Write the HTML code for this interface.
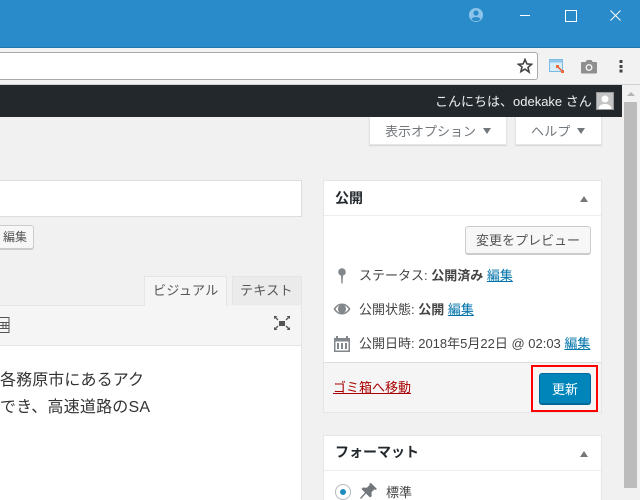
<!DOCTYPE html>
<html lang="ja"><head><meta charset="utf-8">
<style>
html,body{margin:0;padding:0;height:500px;overflow:hidden}
body{width:640px;position:relative;background:#f1f1f1;font-family:"Liberation Sans","Noto Sans CJK JP",sans-serif;font-size:13px;color:#444}
div,a,svg{position:absolute;white-space:nowrap}
.t{line-height:18px}
a{color:#0073aa;text-decoration:underline}
b{font-weight:700}
.box{background:#fff;border:1px solid #e5e5e5;box-sizing:border-box}
</style></head><body>
<div style="left:0;top:0;width:640px;height:48px;background:#2a8bcb"></div>
<div style="left:0;top:47px;width:640px;height:1px;background:#2478b0"></div>
<div style="left:0;top:48px;width:640px;height:37px;background:#f2f2f2;border-bottom:1px solid #d0d0d0;box-sizing:border-box"></div>
<div style="left:-5px;top:52px;width:543px;height:28px;background:#fff;border:1px solid #a9a9a9;border-radius:3px;box-sizing:border-box"></div>

<svg style="left:468px;top:7px" width="16" height="16" viewBox="0 0 16 16"><circle cx="8" cy="8" r="7" fill="#8cc4ea"/><circle cx="8" cy="6" r="2.6" fill="#2a8bcb"/><path d="M3.500 12c1-2.500 8-2.500 9 0l-2 2h-5z" fill="#2a8bcb"/></svg>
<div style="left:520px;top:15px;width:10px;height:1px;background:#fff"></div>
<div style="left:565px;top:10px;width:10px;height:10px;border:1px solid #fff"></div>
<svg style="left:610px;top:10px" width="11" height="11" viewBox="0 0 11 11"><path d="M.5.500l10 10M10.500.500l-10 10" stroke="#fff" stroke-width="1" fill="none"/></svg>

<svg style="left:517px;top:58px" width="16" height="16" viewBox="0 0 16 16"><path d="M8 1.500l1.900 4.400 4.700.4-3.600 3.100 1.100 4.700L8 11.100l-4.100 2.500L5 8.900 1.400 6.300l4.700-.4z" fill="none" stroke="#444" stroke-width="1.600"/></svg>
<svg style="left:548px;top:58px" width="18" height="16" viewBox="0 0 18 16"><rect x="1.500" y="1.500" width="13" height="12" fill="#d9edf9" stroke="#79b8e2"/><rect x="1.500" y="1.500" width="13" height="3" fill="#8cc4ea"/><path d="M9 8l5 5" stroke="#e0592a" stroke-width="1.500"/><rect x="8" y="7" width="3" height="3" fill="#ee6a3c"/><rect x="13" y="12" width="3" height="3" fill="#ee6a3c"/></svg>
<svg style="left:581px;top:59px" width="16" height="15" viewBox="0 0 16 15"><path d="M1 3h3.500L6 1h4.500l1.200 2H15a1 1 0 0 1 1 1v9.500a1 1 0 0 1-1 1H1a1 1 0 0 1-1-1V4a1 1 0 0 1 1-1z" fill="#8f8f8f"/><circle cx="8" cy="8.500" r="3.500" fill="#f2f2f2"/><circle cx="8" cy="8.500" r="2.100" fill="#8f8f8f"/></svg>
<svg style="left:619px;top:59px" width="4" height="14" viewBox="0 0 4 14"><rect x=".5" y="1" width="3" height="3" fill="#444"/><rect x=".5" y="6" width="3" height="3" fill="#444"/><rect x=".5" y="10.500" width="3" height="3" fill="#444"/></svg>

<div style="left:0;top:85px;width:622px;height:32px;background:#23282d"></div>
<div class="t" style="left:435px;top:93px;color:#eee;font-size:13px">こんにちは、odekake さん</div>
<div style="left:596px;top:92px;width:18px;height:18px;background:#c4c4c4;box-shadow:inset 0 0 0 1px #999;overflow:hidden">
<svg style="left:0;top:0" width="18" height="18" viewBox="0 0 18 18"><circle cx="9" cy="7" r="3.500" fill="#fff"/><path d="M2.500 17c.5-4 3.500-5 6.500-5s6 1 6.500 5z" fill="#fff"/></svg></div>

<div style="left:622px;top:85px;width:18px;height:415px;background:#f1f1f1"></div>
<div style="left:624px;top:102px;width:13px;height:386px;background:#bcbcbc"></div>
<div style="left:627px;top:92px;width:0;height:0;border-left:4px solid transparent;border-right:4px solid transparent;border-bottom:4px solid #b4b4b4"></div>

<div style="left:369px;top:117px;width:138px;height:28px;background:#fff;box-shadow:0 1px 1px rgba(0,0,0,.12);border:1px solid #e5e5e5;border-top:0;box-sizing:border-box"></div>
<div class="t" style="left:385px;top:123px;color:#72777c">表示オプション</div>
<div style="left:483px;top:128px;border-left:4px solid transparent;border-right:4px solid transparent;border-top:6px solid #72777c"></div>
<div style="left:515px;top:117px;width:87px;height:28px;background:#fff;box-shadow:0 1px 1px rgba(0,0,0,.12);border:1px solid #e5e5e5;border-top:0;box-sizing:border-box"></div>
<div class="t" style="left:531px;top:123px;color:#72777c;letter-spacing:.2px">ヘルプ</div>
<div style="left:577px;top:128px;border-left:4px solid transparent;border-right:4px solid transparent;border-top:6px solid #72777c"></div>

<div class="box" style="left:-3px;top:180px;width:305px;height:37px;border-color:#ddd"></div>
<div style="left:-5px;top:225px;width:39px;height:24px;background:#f7f7f7;border:1px solid #ccc;border-radius:3px;box-sizing:border-box;box-shadow:0 1px 0 #ccc"></div>
<div class="t" style="left:3px;top:228px;font-size:12px;color:#555">編集</div>

<div style="left:144px;top:276px;width:83px;height:30px;background:#f5f5f5;border:1px solid #e5e5e5;border-bottom:0;box-sizing:border-box"></div>
<div class="t" style="left:153px;top:282px;color:#555;letter-spacing:.4px">ビジュアル</div>
<div style="left:232px;top:276px;width:70px;height:29px;background:#ebebeb;border:1px solid #e5e5e5;border-bottom:0;box-sizing:border-box"></div>
<div class="t" style="left:240px;top:282px;color:#555;letter-spacing:.3px">テキスト</div>
<div style="left:0;top:305px;width:144px;height:1px;background:#e5e5e5"></div>
<div style="left:0;top:306px;width:302px;height:40px;background:#f5f5f5;border-right:1px solid #e5e5e5;border-bottom:1px solid #e5e5e5;box-sizing:border-box"></div>
<div style="left:0;top:346px;width:302px;height:154px;background:#fff;border-right:1px solid #e5e5e5;box-sizing:border-box"></div>
<svg style="left:0;top:317px" width="10" height="16" viewBox="0 0 10 16"><path d="M0 .5h9v15H0M0 5.500h9M0 8.500h9M0 11.500h9M3 5.500v6M6 5.500v6" fill="none" stroke="#555"/></svg>
<svg style="left:274px;top:316px" width="16" height="14" viewBox="0 0 16 14"><rect x="5" y="5" width="6" height="5" fill="#555"/><path d="M1 1l3 3M15 1l-3 3M1 13l3-3M15 13l-3-3" stroke="#555" stroke-width="1.300"/><path d="M0 0h3.500L0 3zM16 0h-3.500L16 3zM0 14h3.500L0 11zM16 14h-3.500l3.500-3z" fill="#555"/></svg>
<div class="t" style="left:0;top:371px;font-size:16px;line-height:20px;color:#333;letter-spacing:.1px">各務原市にあるアク</div>
<div class="t" style="left:0;top:398px;font-size:16px;line-height:20px;color:#333;letter-spacing:.2px">でき、高速道路のSA</div>

<div class="box" style="left:323px;top:180px;width:279px;height:233px"></div>
<div style="left:324px;top:215px;width:277px;height:1px;background:#eee"></div>
<div class="t" style="left:335px;top:189px;font-size:14px;font-weight:700;color:#23282d">公開</div>
<div style="left:580px;top:196px;border-left:4px solid transparent;border-right:4px solid transparent;border-bottom:6px solid #72777c"></div>
<div style="left:465px;top:226px;width:126px;height:28px;background:#f7f7f7;border:1px solid #ccc;border-radius:3px;box-sizing:border-box;box-shadow:0 1px 0 #ccc"></div>
<div class="t" style="left:476px;top:232px;color:#555">変更をプレビュー</div>

<svg style="left:337px;top:268px" width="10" height="16" viewBox="0 0 10 16"><circle cx="5" cy="4" r="3.800" fill="#82878c"/><path d="M4 7h2l-.4 8.500h-1.200z" fill="#82878c"/></svg>
<div class="t" style="left:359px;top:267px">ステータス: <b>公開済み</b> <a style="position:static" href="#">編集</a></div>
<svg style="left:333px;top:302px" width="18" height="14" viewBox="0 0 18 14"><path d="M.5 7C3 3 6 1.500 9 1.500S15 3 17.500 7C15 11 12 12.500 9 12.500S3 11 .5 7z" fill="#82878c"/><path d="M2.500 7C4 4.500 6 3.500 7 3.300 5.500 4 5 5.500 5 7s.5 3 2 3.700C6 10.500 4 9.500 2.500 7zM15.500 7c-1.500-2.500-3.500-3.500-4.500-3.700 1.500.7 2 2.200 2 3.700s-.5 3-2 3.700c1-.2 3-1.200 4.500-3.700z" fill="#fff"/></svg>
<div class="t" style="left:359px;top:301px">公開状態: <b>公開</b> <a style="position:static" href="#">編集</a></div>
<svg style="left:334px;top:335px" width="16" height="17" viewBox="0 0 16 17"><path d="M0 3h2V1h2v2h8V1h2v2h2v14H0z" fill="#82878c"/><path d="M1.500 6.500h13v9h-13z" fill="#fff"/><path d="M3 8h2v6H3zM7 8h2v6H7zM11 8h2v6h-2z" fill="#82878c"/></svg>
<div class="t" style="left:359px;top:335px">公開日時: 2018年5月22日 @ 02:03 <a style="position:static" href="#">編集</a></div>

<div style="left:324px;top:362px;width:277px;height:50px;background:#f5f5f5;border-top:1px solid #ddd;box-sizing:border-box"></div>
<a class="t" href="#" style="left:333px;top:379px;color:#a00">ゴミ箱へ移動</a>
<div style="left:531px;top:365px;width:67px;height:47px;border:2px solid #f00;box-sizing:border-box"></div>
<div style="left:539px;top:373px;width:52px;height:31px;background:#0085ba;border:1px solid #006799;border-radius:3px;box-sizing:border-box;box-shadow:0 1px 0 #006799"></div>
<div class="t" style="left:552px;top:381px;color:#fff">更新</div>

<div class="box" style="left:323px;top:435px;width:279px;height:66px"></div>
<div style="left:324px;top:470px;width:277px;height:1px;background:#eee"></div>
<div class="t" style="left:335px;top:443px;font-size:14px;font-weight:700;color:#23282d">フォーマット</div>
<div style="left:580px;top:451px;border-left:4px solid transparent;border-right:4px solid transparent;border-bottom:6px solid #72777c"></div>
<div style="left:335px;top:484px;width:16px;height:16px;border:1px solid #b4b9be;border-radius:50%;box-sizing:border-box;background:#fff"></div>
<div style="left:340px;top:489px;width:6px;height:6px;border-radius:50%;background:#1e8cbe"></div>
<svg style="left:360px;top:483px" width="18" height="17" viewBox="0 0 18 17"><path d="M11 0l6 6-1.500 1-1-.8-3 3 .2 4L10 14.500 6 10.500 1 16l-1-1 5-5.500L1.500 6l1.300-1.500 4 .3 3-3-.8-1z" fill="#72777c"/></svg>
<div class="t" style="left:386px;top:484px">標準</div>
</body></html>
